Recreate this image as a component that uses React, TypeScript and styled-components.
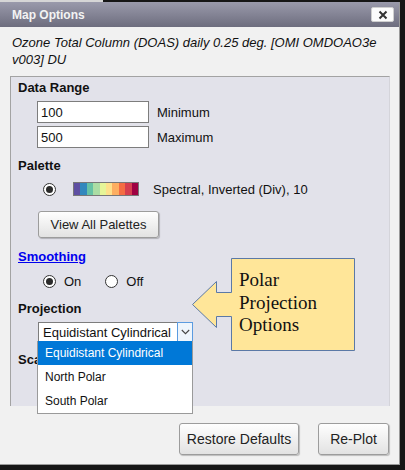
import React from 'react'
import styled, { createGlobalStyle } from 'styled-components'

const GlobalStyle = createGlobalStyle`
  html, body {
    margin: 0;
    padding: 0;
    background: #161616;
    font-family: "Liberation Sans", Arial, sans-serif;
  }
`

const TopStrip = styled.div`
  height: 2px;
  display: flex;
  .light {
    width: 103px;
    background: #d6d6d6;
  }
`

const Dialog = styled.div`
  width: 400px;
  height: 463px;
  box-sizing: border-box;
  background: #f1f1f1;
  border-right: 1px solid #9a9a9a;
  border-bottom: 1px solid #9a9a9a;
  display: flex;
  flex-direction: column;
`

const TitleBar = styled.div`
  height: 25px;
  flex: none;
  display: flex;
  align-items: center;
  justify-content: space-between;
  padding: 0 5px 0 12px;
  background: linear-gradient(#9a9aab, #6d6d7e);
  color: #f3f3f3;
  font-size: 12px;
  font-weight: bold;
`

const CloseButton = styled.div`
  width: 23px;
  height: 15px;
  box-sizing: border-box;
  background: #fcfcfc;
  border: 1px solid #cfcfcf;
  border-radius: 2px;
  display: flex;
  align-items: center;
  justify-content: center;
`

const Body = styled.div`
  flex: 1;
  padding: 7px 9px 0 10px;
  display: flex;
  flex-direction: column;
`

const Subtitle = styled.p`
  margin: 0 0 8px 2px;
  font-size: 13px;
  line-height: 17px;
  font-style: italic;
  color: #111;
`

const Panel = styled.div`
  height: 330px;
  box-sizing: border-box;
  position: relative;
  background: #e2e2ea;
  border-top: 1px solid #a3a3a3;
  border-left: 1px solid #a3a3a3;
  border-right: 1px solid #d4d4da;
  padding: 3px 0 0 7px;
`

const Heading = styled.div<{ gap: number; link?: boolean }>`
  margin-top: ${p => p.gap}px;
  font-size: 13px;
  line-height: 16px;
  font-weight: bold;
  color: ${p => (p.link ? '#0000ee' : '#111')};
  text-decoration: ${p => (p.link ? 'underline' : 'none')};
`

const InputRow = styled.div<{ gap: number }>`
  margin: ${p => p.gap}px 0 0 19px;
  display: flex;
  align-items: center;
  font-size: 13px;
  color: #111;
`

const TextBox = styled.div`
  width: 112px;
  height: 22px;
  box-sizing: border-box;
  background: #fff;
  border: 1px solid #7d7d7d;
  padding-left: 3px;
  display: flex;
  align-items: center;
  margin-right: 8px;
`

const OptionRow = styled.div<{ gap: number }>`
  margin: ${p => p.gap}px 0 0 25px;
  height: 16px;
  display: flex;
  align-items: center;
  font-size: 13px;
  color: #111;
`

const Radio = styled.span<{ checked?: boolean; space: number }>`
  width: 13px;
  height: 13px;
  box-sizing: border-box;
  border-radius: 50%;
  border: 1px solid #333;
  background: #fff;
  display: flex;
  align-items: center;
  justify-content: center;
  margin-right: ${p => p.space}px;
  flex: none;
  &::after {
    content: '';
    width: 7px;
    height: 7px;
    border-radius: 50%;
    background: ${p => (p.checked ? '#2b2b2b' : 'transparent')};
  }
`

const Strip = styled.div`
  width: 66px;
  height: 14px;
  box-sizing: border-box;
  border: 1px solid #777;
  display: flex;
  margin-right: 14px;
`

const Swatch = styled.span<{ color: string }>`
  flex: 1;
  background: ${p => p.color};
`

const PushButton = styled.button<{ width: number; height: number; size: number }>`
  width: ${p => p.width}px;
  height: ${p => p.height}px;
  font-family: "Liberation Sans", Arial, sans-serif;
  font-size: ${p => p.size}px;
  color: #222;
  background: linear-gradient(#fefefe, #e2e2e2);
  border: 1px solid #9c9c9c;
  border-radius: 3px;
  box-shadow: 1px 1px 1px rgba(0, 0, 0, 0.22);
  padding: 0;
`

const Indent = styled.div<{ gap: number }>`
  margin: ${p => p.gap}px 0 0 20px;
`

const OnLabel = styled.span`
  margin-right: 24px;
`

const SelectWrap = styled.div`
  position: relative;
  margin: 5px 0 0 20px;
  width: 155px;
  height: 20px;
  box-sizing: border-box;
  background: #fff;
  border: 1px solid #7d7d7d;
  display: flex;
  align-items: center;
  font-size: 13px;
  color: #111;
`

const SelectText = styled.span`
  flex: 1;
  padding-left: 4px;
  white-space: nowrap;
`

const ArrowBox = styled.span`
  width: 16px;
  height: 20px;
  margin: -1px -1px -1px 0;
  box-sizing: border-box;
  border: 1px solid #5b9be0;
  background: #eef5fc;
  display: flex;
  align-items: center;
  justify-content: center;
`

const ListBox = styled.div`
  position: absolute;
  top: 100%;
  left: -2px;
  width: 156px;
  box-sizing: border-box;
  background: #fff;
  border: 1px solid #9a9a9a;
  border-top: none;
  z-index: 2;
`

const ListItem = styled.div<{ active?: boolean }>`
  height: 24px;
  display: flex;
  align-items: center;
  padding-left: 7px;
  font-size: 12px;
  color: ${p => (p.active ? '#fff' : '#111')};
  background: ${p => (p.active ? '#0078d7' : 'transparent')};
`

const Callout = styled.div`
  position: absolute;
  left: 181px;
  top: 181px;
  width: 163px;
  height: 93px;
  svg {
    position: absolute;
    left: 0;
    top: 0;
  }
`

const CalloutText = styled.div`
  position: absolute;
  left: 47px;
  top: 11px;
  font-family: "Liberation Serif", "Times New Roman", serif;
  font-size: 19px;
  line-height: 22.5px;
  color: #111;
`

const Footer = styled.div`
  display: flex;
  justify-content: flex-end;
  gap: 19px;
  padding: 17px 1px 0 0;
`

const spectral = ['#5e4fa2', '#3288bd', '#66c2a5', '#abdda4', '#e6f598', '#fee08b', '#fdae61', '#f46d43', '#d53e4f', '#9e0142']

const App: React.FC = () => {
  return (
    <>
      <GlobalStyle />
      <TopStrip>
        <div className="light" />
      </TopStrip>
      <Dialog>
        <TitleBar>
          <span>Map Options</span>
          <CloseButton>
            <svg width="10" height="10" viewBox="0 0 10 10">
              <path d="M1.5 1.5 L8.5 8.5 M8.5 1.5 L1.5 8.5" stroke="#333" strokeWidth="2" />
            </svg>
          </CloseButton>
        </TitleBar>
        <Body>
          <Subtitle>Ozone Total Column (DOAS) daily 0.25 deg. [OMI OMDOAO3e v003] DU</Subtitle>
          <Panel>
            <Heading gap={0}>Data Range</Heading>
            <InputRow gap={5}>
              <TextBox>100</TextBox>
              Minimum
            </InputRow>
            <InputRow gap={3}>
              <TextBox>500</TextBox>
              Maximum
            </InputRow>

            <Heading gap={10}>Palette</Heading>
            <OptionRow gap={7}>
              <Radio checked space={17} />
              <Strip>
                {spectral.map(c => (
                  <Swatch key={c} color={c} />
                ))}
              </Strip>
              Spectral, Inverted (Div), 10
            </OptionRow>
            <Indent gap={14}>
              <PushButton width={121} height={27} size={13}>View All Palettes</PushButton>
            </Indent>

            <Heading gap={11} link>Smoothing</Heading>
            <OptionRow gap={8}>
              <Radio checked space={8} />
              <OnLabel>On</OnLabel>
              <Radio space={8} />
              Off
            </OptionRow>

            <Heading gap={12}>Projection</Heading>
            <SelectWrap>
              <SelectText>Equidistant Cylindrical</SelectText>
              <ArrowBox>
                <svg width="9" height="6" viewBox="0 0 9 6">
                  <path d="M0.8 1 L4.5 4.7 L8.2 1" fill="none" stroke="#444" strokeWidth="1.1" />
                </svg>
              </ArrowBox>
              <ListBox>
                <ListItem active>Equidistant Cylindrical</ListItem>
                <ListItem>North Polar</ListItem>
                <ListItem>South Polar</ListItem>
              </ListBox>
            </SelectWrap>

            <Heading gap={10}>Scale</Heading>

            <Callout>
              <svg width="163" height="93" viewBox="0 0 163 93">
                <path
                  d="M39.5 0.5 H162.5 V92.5 H39.5 V58.5 H24.5 V69.5 L0.5 46.5 L24.5 23.5 V34.5 H39.5 Z"
                  fill="#ffe699"
                  stroke="#5b79a6"
                  strokeWidth="1"
                />
              </svg>
              <CalloutText>
                Polar
                <br />
                Projection
                <br />
                Options
              </CalloutText>
            </Callout>
          </Panel>
          <Footer>
            <PushButton width={120} height={32} size={14}>Restore Defaults</PushButton>
            <PushButton width={71} height={32} size={14}>Re-Plot</PushButton>
          </Footer>
        </Body>
      </Dialog>
    </>
  )
}

export default App
